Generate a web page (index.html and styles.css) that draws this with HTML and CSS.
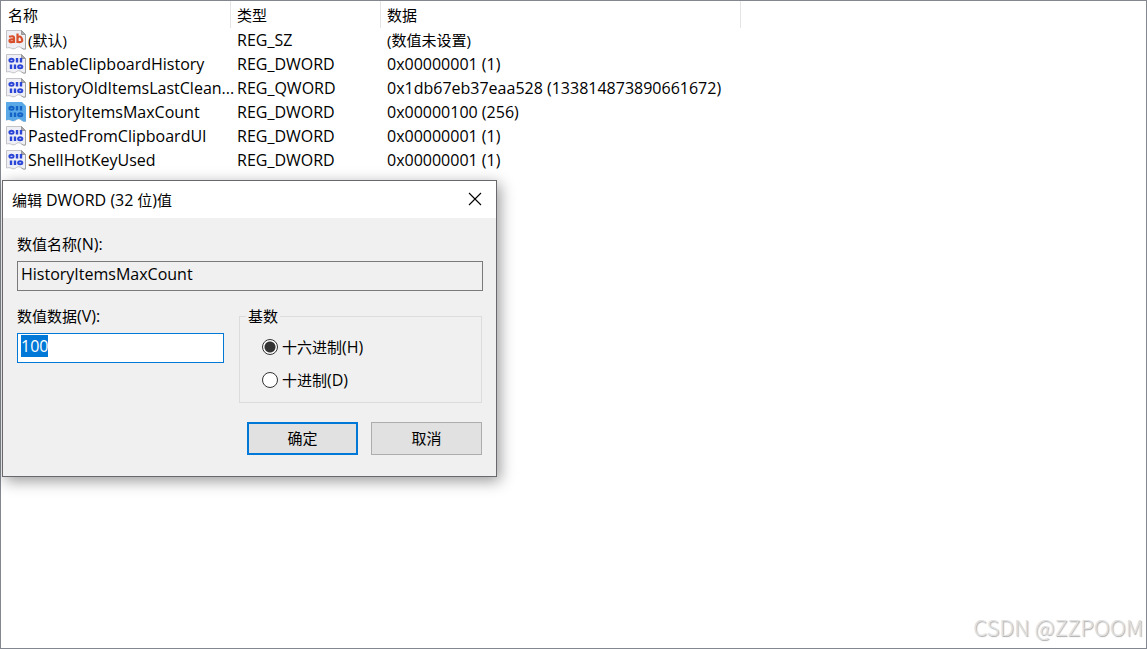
FILE: index.html
```html
<!DOCTYPE html>
<html lang="zh-CN">
<head>
  <meta charset="UTF-8" />
  <meta name="viewport" content="width=device-width, initial-scale=1" />
  <title>注册表编辑器</title>
  <link rel="stylesheet" href="styles.css">
</head>
<body>
  <svg width="0" height="0" class="sprites" aria-hidden="true">
    <symbol id="page" viewBox="0 0 20 20">
      <path d="M.5.5h15l4 4v14.500c-1.500.6-3 0-4.500-1.500-1.500-1-3-1-4.500 0-1.500 1.500-3 1.800-5 .8-2-.8-3-.8-5-.3z" fill="#eff0f5" stroke="#c4c4c8"/>
      <path d="M15.500.5v4h4z" fill="#a8a8a8" stroke="#999"/>
      <path d="M19.500 4.500v14.500q-2 .6-4-1" fill="none" stroke="#a4a4a4"/>
    </symbol>
    <symbol id="binary" viewBox="0 0 20 20">
      <g fill="none" stroke-width="2">
        <ellipse cx="5.500" cy="6.200" rx="2.100" ry="1.500"/>
        <path d="M11 4v4.600M15 4v4.600M5 10.400v4.600M9 10.400v4.600" stroke-width="2.400"/>
        <ellipse cx="14.200" cy="12.700" rx="2.100" ry="1.500"/>
      </g>
    </symbol>
  </svg>

  <main class="registry">
    <table class="values">
      <thead>
        <tr><th class="col-name">名称</th><th class="col-type">类型</th><th class="col-data">数据</th><th></th></tr>
      </thead>
      <tbody>
        <tr>
          <td><div class="name"><svg class="icon" viewBox="0 0 20 20"><use href="#page"/><g fill="none" stroke="#d9512c" stroke-width="2.200"><path d="M3 6.800q5-1.500 5 1v5.200M8 9.300H5.500Q3.500 9.300 3.500 10.800T5.500 12.200 8 11"/><path d="M11.500 3.500v9.500M11.500 8q1-1.500 2.300-1.500t2.200 2.800-2.200 2.800T11.500 10.500"/></g></svg><span class="cjk">(默认)</span></div></td>
          <td>REG_SZ</td>
          <td class="cjk">(数值未设置)</td>
          <td></td>
        </tr>
        <tr>
          <td><div class="name"><svg class="icon" viewBox="0 0 20 20"><use href="#page"/><use href="#binary"/></svg><span>EnableClipboardHistory</span></div></td>
          <td>REG_DWORD</td>
          <td>0x00000001 (1)</td>
          <td></td>
        </tr>
        <tr>
          <td><div class="name"><svg class="icon" viewBox="0 0 20 20"><use href="#page"/><use href="#binary"/></svg><span>HistoryOldItemsLastClean...</span></div></td>
          <td>REG_QWORD</td>
          <td>0x1db67eb37eaa528 (133814873890661672)</td>
          <td></td>
        </tr>
        <tr>
          <td><div class="name"><svg class="icon selected" viewBox="0 0 20 20"><use href="#page"/><path class="tint" d="M0 0h16l4 4v15.500q-3 .5-5-1.500t-5 0-5 .5-5 0z"/><use href="#binary"/></svg><span>HistoryItemsMaxCount</span></div></td>
          <td>REG_DWORD</td>
          <td>0x00000100 (256)</td>
          <td></td>
        </tr>
        <tr>
          <td><div class="name"><svg class="icon" viewBox="0 0 20 20"><use href="#page"/><use href="#binary"/></svg><span>PastedFromClipboardUI</span></div></td>
          <td>REG_DWORD</td>
          <td>0x00000001 (1)</td>
          <td></td>
        </tr>
        <tr>
          <td><div class="name"><svg class="icon" viewBox="0 0 20 20"><use href="#page"/><use href="#binary"/></svg><span>ShellHotKeyUsed</span></div></td>
          <td>REG_DWORD</td>
          <td>0x00000001 (1)</td>
          <td></td>
        </tr>
      </tbody>
    </table>

    <form class="dialog" role="dialog" aria-labelledby="dialogTitle">
      <header class="titlebar">
        <h1 id="dialogTitle">编辑 <span class="latin">DWORD (32</span> 位<span class="latin">)</span>值</h1>
        <button type="button" class="close" aria-label="关闭">
          <svg width="14" height="14" viewBox="0 0 14 14"><path d="M1 1l12 12M13 1L1 13" stroke="#000" stroke-width="1.100"/></svg>
        </button>
      </header>
      <div class="content">
        <div class="field">
          <label for="valueName">数值名称<span class="latin">(N):</span></label>
          <input type="text" id="valueName" class="readonly" value="HistoryItemsMaxCount" readonly />
        </div>
        <div class="columns">
          <div class="field">
            <label for="valueData">数值数据<span class="latin">(V):</span></label>
            <input type="text" id="valueData" value="100" />
          </div>
          <fieldset class="base">
            <legend>基数</legend>
            <label><input type="radio" name="base" checked /><span>十六进制<span class="latin">(H)</span></span></label>
            <label><input type="radio" name="base" /><span>十进制<span class="latin">(D)</span></span></label>
          </fieldset>
        </div>
        <div class="buttons">
          <button type="submit" class="default">确定</button>
          <button type="button">取消</button>
        </div>
      </div>
    </form>

    <div class="watermark">CSDN @ZZPOOM</div>
  </main>

  <script>
    const valueData = document.getElementById('valueData');
    valueData.focus();
    valueData.select();
  </script>
</body>
</html>
```
FILE: styles.css
```css
* {
  box-sizing: border-box;
}

body {
  margin: 0;
  background: #fff;
  color: #000;
  font: 15px/20px "Open Sans", "Noto Sans CJK SC", sans-serif;
}

.sprites {
  position: absolute;
}

.registry {
  position: relative;
  min-height: 100vh;
  border: 1px solid #828790;
}

.values {
  width: 100%;
  table-layout: fixed;
  border-collapse: separate;
  border-spacing: 0;
  font-size: 16px;
}

.values th {
  height: 27px;
  padding: 0 6px;
  border-right: 1px solid #e5e5e5;
  font-size: 15px;
  font-weight: normal;
  text-align: left;
}

.values th:first-child {
  padding-left: 7px;
}

.values th:last-child {
  border-right: none;
}

.values td {
  height: 24px;
  padding: 0 6px;
  white-space: nowrap;
}

.values td:first-child {
  padding: 0 0 0 5px;
}

.col-name {
  width: 230px;
}

.col-type {
  width: 150px;
}

.col-data {
  width: 360px;
}

.values .cjk {
  font-size: 15px;
}

.latin {
  font-size: 16px;
}

.name {
  display: flex;
  align-items: center;
  gap: 2px;
}

.icon {
  flex: none;
  width: 20px;
  height: 20px;
  stroke: #2b45d8;
}

.icon.selected {
  stroke: #1464c8;
}

.tint {
  fill: #5ba9e6;
  stroke: none;
}

.dialog {
  position: absolute;
  top: 179px;
  left: 1px;
  width: 495px;
  border: 1px solid #6a686c;
  background: #f0f0f0;
  box-shadow: 3px 4px 14px rgba(0, 0, 0, 0.4);
}

.titlebar {
  display: flex;
  align-items: center;
  justify-content: space-between;
  height: 37px;
  padding: 0 14px 0 9px;
  background: #fff;
}

.titlebar h1 {
  margin: 0;
  font-size: 15px;
  font-weight: normal;
}

.close {
  display: flex;
  padding: 0 0 2px;
  border: none;
  background: none;
}

.content {
  display: flex;
  flex-direction: column;
  gap: 15px;
  padding: 16px 13px 21px 14px;
}

.field {
  display: flex;
  flex-direction: column;
  gap: 7px;
}

.field input {
  width: 100%;
  height: 30px;
  padding: 0 3px 4px;
  border: 1px solid #0078d7;
  border-radius: 0;
  outline: none;
  background: #fff;
  font: inherit;
  font-size: 16px;
}

.field .readonly {
  border-color: #7a7a7a;
  background: #f0f0f0;
}

.field input::selection {
  background: #0078d7;
  color: #fff;
}

.columns {
  display: grid;
  grid-template-columns: 207px 1fr;
  gap: 15px;
}

.base {
  display: flex;
  flex-direction: column;
  gap: 13px;
  margin: 0 1px 0 0;
  padding: 11px 22px 12px;
  border: 1px solid #dcdcdc;
}

.base legend {
  margin-left: -16px;
  padding: 0 2px;
}

.base label {
  display: flex;
  align-items: center;
  gap: 4px;
}

.base input {
  appearance: none;
  width: 16px;
  height: 16px;
  margin: 0;
  border: 1px solid #333;
  border-radius: 50%;
  background: #fff;
}

.base input:checked {
  background: radial-gradient(circle, #333 5px, #fff 6px);
}

.buttons {
  display: flex;
  justify-content: flex-end;
  gap: 13px;
  padding: 4px 1px 0 0;
}

.buttons button {
  width: 111px;
  height: 33px;
  padding: 0 0 2px;
  border: 1px solid #adadad;
  background: #e1e1e1;
  color: #000;
  font: inherit;
}

.buttons .default {
  border: 2px solid #0078d7;
}

.watermark {
  position: absolute;
  right: 3px;
  bottom: 8px;
  color: #e0e0e0;
  font: 300 22px/28px "Noto Sans CJK SC", sans-serif;
  text-shadow: 1px 1px 1px #aaa;
}
```
